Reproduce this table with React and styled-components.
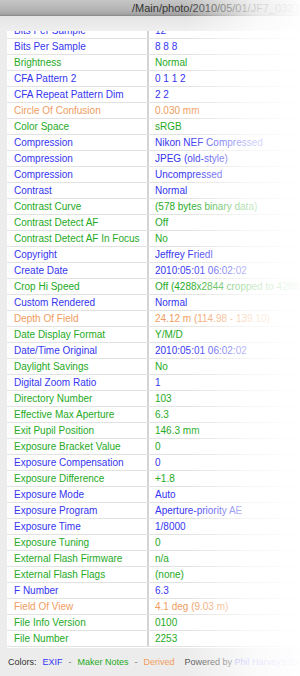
import styled, { createGlobalStyle } from 'styled-components';

const GlobalStyle = createGlobalStyle`
  html, body {
    margin: 0;
    padding: 0;
    background: #ececec;
  }
  body {
    font-family: 'Liberation Sans', Arial, sans-serif;
  }
`;

const COLORS = {
  exif: '#3535f2',
  maker: '#25aa25',
  derived: '#f09c5e',
};

const rows = [
  ['Bits Per Sample', '12', 'exif'],
  ['Bits Per Sample', '8 8 8', 'exif'],
  ['Brightness', 'Normal', 'maker'],
  ['CFA Pattern 2', '0 1 1 2', 'exif'],
  ['CFA Repeat Pattern Dim', '2 2', 'exif'],
  ['Circle Of Confusion', '0.030 mm', 'derived'],
  ['Color Space', 'sRGB', 'maker'],
  ['Compression', 'Nikon NEF Compressed', 'exif'],
  ['Compression', 'JPEG (old-style)', 'exif'],
  ['Compression', 'Uncompressed', 'exif'],
  ['Contrast', 'Normal', 'exif'],
  ['Contrast Curve', '(578 bytes binary data)', 'maker'],
  ['Contrast Detect AF', 'Off', 'maker'],
  ['Contrast Detect AF In Focus', 'No', 'maker'],
  ['Copyright', 'Jeffrey Friedl', 'exif'],
  ['Create Date', '2010:05:01 06:02:02', 'exif'],
  ['Crop Hi Speed', 'Off (4288x2844 cropped to 4288x2844 at pixel 0,0)', 'maker'],
  ['Custom Rendered', 'Normal', 'exif'],
  ['Depth Of Field', '24.12 m (114.98 - 139.10)', 'derived'],
  ['Date Display Format', 'Y/M/D', 'maker'],
  ['Date/Time Original', '2010:05:01 06:02:02', 'exif'],
  ['Daylight Savings', 'No', 'maker'],
  ['Digital Zoom Ratio', '1', 'exif'],
  ['Directory Number', '103', 'maker'],
  ['Effective Max Aperture', '6.3', 'maker'],
  ['Exit Pupil Position', '146.3 mm', 'maker'],
  ['Exposure Bracket Value', '0', 'maker'],
  ['Exposure Compensation', '0', 'exif'],
  ['Exposure Difference', '+1.8', 'maker'],
  ['Exposure Mode', 'Auto', 'exif'],
  ['Exposure Program', 'Aperture-priority AE', 'exif'],
  ['Exposure Time', '1/8000', 'exif'],
  ['Exposure Tuning', '0', 'maker'],
  ['External Flash Firmware', 'n/a', 'maker'],
  ['External Flash Flags', '(none)', 'maker'],
  ['F Number', '6.3', 'exif'],
  ['Field Of View', '4.1 deg (9.03 m)', 'derived'],
  ['File Info Version', '0100', 'maker'],
  ['File Number', '2253', 'maker'],
];

export default function App() {
  return (
    <>
      <GlobalStyle />
      <Page>
        <TitleBar>/Main/photo/2010/05/01/JF7_03271.NEF</TitleBar>
        <Gap />
        <Viewport>
          <TagTable>
            {rows.map(([tag, value, group], i) => (
              <Row key={i} $color={COLORS[group]}>
                <TagName>{tag}</TagName>
                <TagValue>{value}</TagValue>
              </Row>
            ))}
          </TagTable>
        </Viewport>
        <Footer>
          <span>Colors:</span>
          <Legend $color={COLORS.exif}>EXIF</Legend>
          <Dash>-</Dash>
          <Legend $color={COLORS.maker}>Maker Notes</Legend>
          <Dash>-</Dash>
          <Legend $color={COLORS.derived}>Derived</Legend>
          <Powered>
            Powered by <Legend $color="#8f8ff5">Phil Harvey's ExifTool</Legend>
          </Powered>
        </Footer>
        <Fade />
      </Page>
    </>
  )
}

const Page = styled.div`
  position: relative;
  width: 300px;
  height: 676px;
  overflow: hidden;
  display: flex;
  flex-direction: column;
  background: #ececec;
`

const TitleBar = styled.div`
  height: 15px;
  line-height: 16px;
  padding-left: 132px;
  font-size: 11px;
  color: #333;
  white-space: nowrap;
  overflow: hidden;
  background: linear-gradient(to bottom, #c6c6c6, #b2b2b2 70%, #9e9e9e);
  border-bottom: 1px solid #8c8c8c;
`

const Gap = styled.div`
  height: 15px;
  background: linear-gradient(to bottom, #e4e4e4, #efefef);
`

const Viewport = styled.div`
  height: 617px;
  margin-left: 7px;
  overflow: hidden;
  background: #fff;
`

const TagTable = styled.div`
  margin-top: -8px;
  display: flex;
  flex-direction: column;
`

const Row = styled.div`
  display: flex;
  height: 15px;
  line-height: 15px;
  border-bottom: 1px solid #e2e2e2;
  font-size: 10px;
  color: ${p => p.$color};
  white-space: nowrap;
`

const TagName = styled.div`
  width: 133px;
  flex-shrink: 0;
  padding-left: 7px;
  border-right: 2px solid #d4d4d4;
  overflow: hidden;
`

const TagValue = styled.div`
  padding-left: 6px;
`

const Footer = styled.div`
  flex: 1;
  display: flex;
  align-items: center;
  gap: 6px;
  padding-left: 8px;
  font-size: 9px;
  color: #333;
  white-space: nowrap;
`

const Legend = styled.span`
  color: ${p => p.$color};
`

const Dash = styled.span`
  color: #777;
`

const Powered = styled.span`
  margin-left: 4px;
  color: #555;
`

const Fade = styled.div`
  position: absolute;
  top: 0;
  right: 0;
  bottom: 0;
  width: 115px;
  pointer-events: none;
  background: linear-gradient(to right, rgba(255,255,255,0), rgba(255,255,255,0.75) 60%, rgba(255,255,255,0.97));
`
